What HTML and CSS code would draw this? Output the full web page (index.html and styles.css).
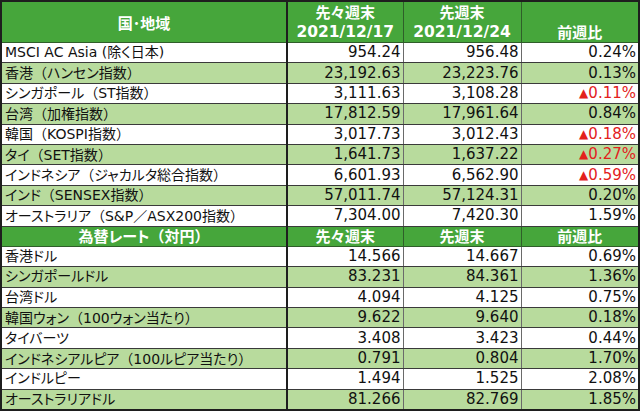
FILE: index.html
```html
<!DOCTYPE html>
<html lang="ja">
<head>
<meta charset="utf-8">
<title>アジア株式・為替</title>
<link rel="stylesheet" href="styles.css">
</head>
<body>
<table class="tbl">
  <colgroup>
    <col class="c1"><col class="c2"><col class="c3"><col class="c4">
  </colgroup>
  <tr class="head head-main">
    <th class="name-h">国･地域</th>
    <th>先々週末<br><span class="date">2021/12/17</span></th>
    <th>先週末<br><span class="date">2021/12/24</span></th>
    <th class="bottom">前週比</th>
  </tr>
  <tr><td class="name">MSCI AC Asia (除く日本)</td><td>954.24</td><td>956.48</td><td>0.24%</td></tr>
  <tr class="alt"><td class="name">香港<span class="fw">（</span>ハンセン指数<span class="fw">）</span></td><td>23,192.63</td><td>23,223.76</td><td>0.13%</td></tr>
  <tr><td class="name">シンガポール<span class="fw">（</span>ST指数<span class="fw">）</span></td><td>3,111.63</td><td>3,108.28</td><td class="neg"><span class="tri">▲</span>0.11%</td></tr>
  <tr class="alt"><td class="name">台湾<span class="fw">（</span>加権指数<span class="fw">）</span></td><td>17,812.59</td><td>17,961.64</td><td>0.84%</td></tr>
  <tr><td class="name">韓国<span class="fw">（</span>KOSPI指数<span class="fw">）</span></td><td>3,017.73</td><td>3,012.43</td><td class="neg"><span class="tri">▲</span>0.18%</td></tr>
  <tr class="alt"><td class="name">タイ<span class="fw">（</span>SET指数<span class="fw">）</span></td><td>1,641.73</td><td>1,637.22</td><td class="neg"><span class="tri">▲</span>0.27%</td></tr>
  <tr><td class="name">インドネシア<span class="fw">（</span>ジャカルタ総合指数<span class="fw">）</span></td><td>6,601.93</td><td>6,562.90</td><td class="neg"><span class="tri">▲</span>0.59%</td></tr>
  <tr class="alt"><td class="name">インド<span class="fw">（</span>SENSEX指数<span class="fw">）</span></td><td>57,011.74</td><td>57,124.31</td><td>0.20%</td></tr>
  <tr><td class="name">オーストラリア<span class="fw">（</span>S&amp;P<span class="fw">／</span>ASX200指数<span class="fw">）</span></td><td>7,304.00</td><td>7,420.30</td><td>1.59%</td></tr>
  <tr class="head head-sub">
    <th>為替レート<span class="fw">（</span>対円<span class="fw">）</span></th>
    <th>先々週末</th>
    <th>先週末</th>
    <th>前週比</th>
  </tr>
  <tr><td class="name">香港ドル</td><td>14.566</td><td>14.667</td><td>0.69%</td></tr>
  <tr class="alt"><td class="name">シンガポールドル</td><td>83.231</td><td>84.361</td><td>1.36%</td></tr>
  <tr><td class="name">台湾ドル</td><td>4.094</td><td>4.125</td><td>0.75%</td></tr>
  <tr class="alt"><td class="name">韓国ウォン<span class="fw">（</span>100ウォン当たり<span class="fw">）</span></td><td>9.622</td><td>9.640</td><td>0.18%</td></tr>
  <tr><td class="name">タイバーツ</td><td>3.408</td><td>3.423</td><td>0.44%</td></tr>
  <tr class="alt"><td class="name">インドネシアルピア<span class="fw">（</span>100ルピア当たり<span class="fw">）</span></td><td>0.791</td><td>0.804</td><td>1.70%</td></tr>
  <tr><td class="name">インドルピー</td><td>1.494</td><td>1.525</td><td>2.08%</td></tr>
  <tr class="alt"><td class="name">オーストラリアドル</td><td>81.266</td><td>82.769</td><td>1.85%</td></tr>
</table>
</body>
</html>
```

FILE: styles.css
```css
html, body {
  margin: 0;
  padding: 0;
  background: #ffffff;
}

.tbl {
  border-collapse: collapse;
  table-layout: fixed;
  width: 638px;
  border: 2px solid #1e1e1e;
  font-family: "DejaVu Sans", "Noto Sans CJK JP", sans-serif;
  font-size: 15px;
  color: #111111;
}

.c1 { width: 286px; }
.c2 { width: 116px; }
.c3 { width: 118px; }
.c4 { width: 118px; }

.tbl tr {
  height: 20.4px;
}

.tbl td {
  padding: 0 2px 0 3px;
  line-height: 17px;
  text-align: right;
  vertical-align: middle;
  white-space: nowrap;
  border-top: 1px solid #3a3a3a;
  border-bottom: 1px solid #3a3a3a;
  border-left: 1px solid #6a6a6a;
  border-right: 1px solid #6a6a6a;
}

.tbl td.name {
  text-align: left;
  font-family: "DejaVu Sans", "Noto Sans CJK JP", sans-serif;
  font-size: 14px;
  font-feature-settings: "palt";
  border-right: 2px solid #1e1e1e;
  border-left: 2px solid #1e1e1e;
  padding-left: 3px;
}

.fw {
  font-family: "Noto Sans CJK JP", sans-serif;
  font-feature-settings: normal;
}

.tbl .alt td {
  background: #b8db9d;
}

.tbl td.neg {
  color: #e3211c;
}

.tri {
  font-size: 12px;
  vertical-align: 1px;
}

.head th {
  background: #46a63b;
  color: #ffffff;
  font-family: "Noto Sans CJK JP", "DejaVu Sans", sans-serif;
  font-weight: bold;
  font-size: 15px;
  font-feature-settings: "palt";
  text-align: center;
  line-height: 19px;
  padding: 0;
  border: 1px solid #2f5e29;
}

.head .date {
  font-family: "DejaVu Sans", sans-serif;
  font-size: 15.5px;
}

.head th:first-child {
  border-right: 2px solid #1e1e1e;
}

.head-main {
  height: 43px;
}

.head-main th {
  vertical-align: middle;
}

.head-main th.bottom {
  vertical-align: bottom;
  padding-bottom: 1px;
}

.head-sub {
  height: 21px;
}

.head-sub th {
  line-height: 18px;
}
```
